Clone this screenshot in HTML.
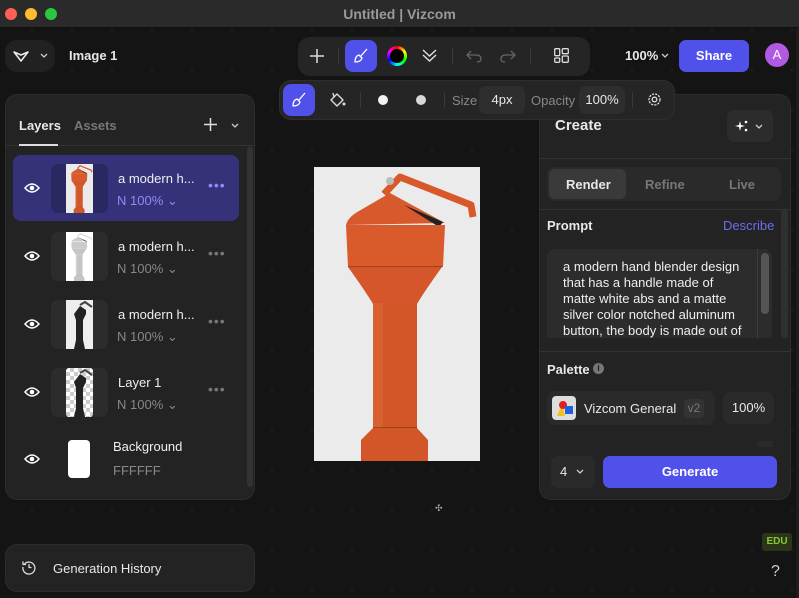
<!DOCTYPE html>
<html><head><meta charset="utf-8"><style>
*{box-sizing:border-box;margin:0;padding:0}
body{width:799px;height:598px;overflow:hidden;background:#141414;font-family:"Liberation Sans",sans-serif;color:#e8e8e8;position:relative;
background-image:radial-gradient(#222 1px,transparent 1.2px);background-size:40px 40px;background-position:12px 10px}
.a{position:absolute}
.title{left:0;top:0;width:799px;height:28px;background:#2a2a2a;border-bottom:1px solid #111;text-align:center;font-weight:bold;font-size:14px;color:#9a9a9a;line-height:28px}
.dot{width:12px;height:12px;border-radius:50%;top:8px}
.box{background:#232323;border-radius:12px}
.t{font-size:13px;white-space:nowrap}
.b{font-weight:bold}
svg{position:absolute;overflow:visible}
.lname{font-size:13px;color:#eee}
.lsub{font-size:13px;color:#888}
.thumb{width:57px;height:49px;background:#2c2c2c;border-radius:7px}
</style></head><body>
<svg width="0" height="0" style="position:absolute">
<defs>
<symbol id="bl" viewBox="0 0 166 294" preserveAspectRatio="none">
<rect width="166" height="294" fill="#ebebeb"/>
<path d="M70 27 L86 10 L157 38 L159 50" fill="none" stroke="#d9582a" stroke-width="7" stroke-linejoin="round"/>
<circle cx="76" cy="14" r="4" fill="#bbb"/>
<path d="M32 58 Q34 50 45 44 L76 26 L131 56 Z" fill="#d8592b"/>
<path d="M90 38 L125 60 L129 55 Z" fill="#222"/>
<path d="M32 58 L131 58 L129 100 L34 100 Z" fill="#d95a2b"/>
<line x1="34" y1="100" x2="128" y2="100" stroke="#6a2a10" stroke-width="1"/>
<path d="M34 100 L128 100 Q110 125 103 137 L59 137 Q52 125 34 100 Z" fill="#d4562a"/>
<rect x="59" y="136" width="44" height="126" fill="#d35628"/>
<rect x="59" y="136" width="10" height="126" fill="#e06a3a" opacity=".5"/>
<line x1="59" y1="261" x2="103" y2="261" stroke="#6a2a10"/>
<path d="M59 261 L103 261 L114 273 L114 294 L47 294 L47 273 Z" fill="#d35628"/>
</symbol>
</defs></svg>

<div class="a title">Untitled | Vizcom</div>
<div class="a dot" style="left:5px;background:#fe5f57"></div>
<div class="a dot" style="left:25px;background:#febc2e"></div>
<div class="a dot" style="left:45px;background:#28c840"></div>

<div class="a box" style="left:5px;top:40px;width:50px;height:32px;background:#212121"></div>
<svg style="left:13px;top:48px" width="16" height="16"><path d="M1 4 L8 13 L15 4 L8 7 Z" fill="none" stroke="#eee" stroke-width="1.5" stroke-linejoin="round"/></svg>
<svg style="left:40px;top:53px" width="8" height="6"><path d="M1 1 L4 4 L7 1" fill="none" stroke="#ccc" stroke-width="1.3"/></svg>
<div class="a t b" style="left:69px;top:48px">Image 1</div>

<!-- toolbar 1 -->
<div class="a box" style="left:298px;top:37px;width:292px;height:39px;background:#252525"></div>
<svg style="left:310px;top:49px" width="14" height="14"><path d="M7 0V14M0 7H14" stroke="#ddd" stroke-width="1.5"/></svg>
<div class="a" style="left:338px;top:48px;width:1px;height:16px;background:#3a3a3a"></div>
<div class="a" style="left:345px;top:40px;width:32px;height:32px;background:#5050ea;border-radius:8px"></div>
<svg style="left:353px;top:48px" width="16" height="16"><path d="M14 1 L7 9 M9 10 L6 7 Q2 8 2 14 Q8 14 9 10 Z" fill="none" stroke="#fff" stroke-width="1.3" stroke-linejoin="round"/></svg>
<div class="a" style="left:387px;top:46px;width:20px;height:20px;border-radius:50%;background:conic-gradient(red,yellow,lime,cyan,blue,magenta,red)"></div>
<div class="a" style="left:390px;top:49px;width:14px;height:14px;border-radius:50%;background:#000"></div>
<svg style="left:422px;top:48px" width="15" height="15"><path d="M1 2 L7.5 8 L14 2 M1 7 L7.5 13 L14 7" fill="none" stroke="#ddd" stroke-width="1.4"/></svg>
<div class="a" style="left:452px;top:48px;width:1px;height:16px;background:#3a3a3a"></div>
<svg style="left:466px;top:49px" width="16" height="14"><path d="M5 2 L1 6 L5 10 M1 6 H10 Q15 6 15 10 Q15 13 11 13" fill="none" stroke="#666" stroke-width="1.3"/></svg>
<svg style="left:500px;top:49px" width="16" height="14"><path d="M11 2 L15 6 L11 10 M15 6 H6 Q1 6 1 10 Q1 13 5 13" fill="none" stroke="#666" stroke-width="1.3"/></svg>
<div class="a" style="left:530px;top:48px;width:1px;height:16px;background:#3a3a3a"></div>
<svg style="left:554px;top:48px" width="15" height="15"><g fill="none" stroke="#ddd" stroke-width="1.3"><rect x=".7" y=".7" width="5" height="7" rx="1"/><rect x="8.3" y=".7" width="6" height="5" rx="1"/><rect x=".7" y="10" width="5" height="4.3" rx="1"/><rect x="8.3" y="8" width="6" height="6.3" rx="1"/></g></svg>

<div class="a t b" style="left:625px;top:48px">100%</div>
<svg style="left:661px;top:53px" width="8" height="6"><path d="M1 1 L4 4 L7 1" fill="none" stroke="#ccc" stroke-width="1.3"/></svg>
<div class="a t b" style="left:679px;top:40px;width:70px;height:32px;background:#5050ea;border-radius:7px;text-align:center;line-height:32px;color:#fff">Share</div>
<div class="a t" style="left:765px;top:43px;width:24px;height:24px;border-radius:50%;background:#b05ae2;color:#fff;text-align:center;line-height:24px">A</div>

<!-- left panel -->
<div class="a box" style="left:5px;top:94px;width:250px;height:406px;border:1px solid #2c2c2c"></div>
<div class="a t b" style="left:19px;top:118px">Layers</div>
<div class="a t b" style="left:74px;top:118px;color:#777">Assets</div>
<svg style="left:204px;top:118px" width="13" height="13"><path d="M6.5 0V13M0 6.5H13" stroke="#ddd" stroke-width="1.5"/></svg>
<svg style="left:231px;top:123px" width="8" height="6"><path d="M1 1 L4 4 L7 1" fill="none" stroke="#ccc" stroke-width="1.3"/></svg>
<div class="a" style="left:5px;top:145px;width:250px;height:1px;background:#333"></div>
<div class="a" style="left:19px;top:144px;width:39px;height:2px;background:#ddd"></div>
<div class="a" style="left:247px;top:147px;width:6px;height:340px;background:#333;border-radius:3px"></div>

<div class="a" style="left:13px;top:155px;width:226px;height:66px;background:#35327a;border-radius:8px"></div>
<div class="a thumb" style="left:51px;top:164px;background:#2a2860"></div>
<svg style="left:66px;top:164px" width="27" height="49"><use href="#bl" width="27" height="49"/></svg>
<div class="a lname" style="left:118px;top:171px">a modern h...</div>
<div class="a lsub" style="left:117px;top:193px;color:#8e8cf5">N 100% ⌄</div>
<div class="a" style="left:208px;top:177px;font-size:14px;color:#8e8cf5;letter-spacing:1px">•••</div>

<div class="a thumb" style="left:51px;top:232px"></div>
<svg style="left:66px;top:232px" width="27" height="49"><use href="#bl" width="27" height="49" style="filter:grayscale(1) brightness(1.8)"/></svg>
<div class="a lname" style="left:118px;top:239px">a modern h...</div>
<div class="a lsub" style="left:117px;top:261px">N 100% ⌄</div>
<div class="a" style="left:208px;top:245px;font-size:14px;color:#777;letter-spacing:1px">•••</div>

<div class="a thumb" style="left:51px;top:300px"></div>
<svg style="left:66px;top:300px" width="27" height="49"><rect width="27" height="49" fill="#eee"/><path d="M8 14 L14 6 L20 10 L20 14 L17 20 L17 40 L19 49 L8 49 L10 40 L10 20 Z" fill="#222"/><path d="M14 5 L19 2 L26 7" fill="none" stroke="#444" stroke-width="2"/></svg>
<div class="a lname" style="left:118px;top:307px">a modern h...</div>
<div class="a lsub" style="left:117px;top:329px">N 100% ⌄</div>
<div class="a" style="left:208px;top:313px;font-size:14px;color:#777;letter-spacing:1px">•••</div>

<div class="a thumb" style="left:51px;top:368px"></div>
<div class="a" style="left:66px;top:368px;width:27px;height:49px;border-radius:3px;background:repeating-conic-gradient(#ccc 0 25%,#fff 0 50%) 0 0/8px 8px"></div>
<svg style="left:66px;top:368px" width="27" height="49"><path d="M8 14 L14 6 L20 10 L20 14 L17 20 L17 40 L19 49 L8 49 L10 40 L10 20 Z" fill="#222"/><path d="M14 5 L19 2 L26 7" fill="none" stroke="#444" stroke-width="2"/></svg>
<div class="a lname" style="left:118px;top:375px">Layer 1</div>
<div class="a lsub" style="left:117px;top:397px">N 100% ⌄</div>
<div class="a" style="left:208px;top:381px;font-size:14px;color:#777;letter-spacing:1px">•••</div>

<div class="a" style="left:68px;top:440px;width:22px;height:38px;background:#fff;border-radius:4px"></div>
<div class="a lname" style="left:113px;top:439px">Background</div>
<div class="a lsub" style="left:113px;top:463px">FFFFFF</div>

<svg style="left:24px;top:182px" width="16" height="12"><path d="M1 6 Q8 -2 15 6 Q8 14 1 6Z" fill="none" stroke="#fff" stroke-width="1.5"/><circle cx="8" cy="6" r="2.3" fill="#fff"/></svg>
<svg style="left:24px;top:250px" width="16" height="12"><path d="M1 6 Q8 -2 15 6 Q8 14 1 6Z" fill="none" stroke="#fff" stroke-width="1.5"/><circle cx="8" cy="6" r="2.3" fill="#fff"/></svg>
<svg style="left:24px;top:318px" width="16" height="12"><path d="M1 6 Q8 -2 15 6 Q8 14 1 6Z" fill="none" stroke="#fff" stroke-width="1.5"/><circle cx="8" cy="6" r="2.3" fill="#fff"/></svg>
<svg style="left:24px;top:386px" width="16" height="12"><path d="M1 6 Q8 -2 15 6 Q8 14 1 6Z" fill="none" stroke="#fff" stroke-width="1.5"/><circle cx="8" cy="6" r="2.3" fill="#fff"/></svg>
<svg style="left:24px;top:453px" width="16" height="12"><path d="M1 6 Q8 -2 15 6 Q8 14 1 6Z" fill="none" stroke="#fff" stroke-width="1.5"/><circle cx="8" cy="6" r="2.3" fill="#fff"/></svg>

<div class="a box" style="left:5px;top:544px;width:250px;height:48px;border:1px solid #2c2c2c"></div>
<svg style="left:22px;top:560px" width="14" height="14"><path d="M2.5 4 A6 6 0 1 1 1 7" fill="none" stroke="#ddd" stroke-width="1.3"/><path d="M1 1.5 V4.5 H4" fill="none" stroke="#ddd" stroke-width="1.3"/><path d="M7 4 V7.5 H9.5" fill="none" stroke="#ddd" stroke-width="1.3"/></svg>
<div class="a t" style="left:53px;top:561px">Generation History</div>

<!-- canvas image -->
<svg style="left:314px;top:167px" width="166" height="294"><use href="#bl" width="166" height="294"/></svg>
<div class="a" style="left:435px;top:503px;font-size:9px;color:#aaa">✣</div>

<!-- right panel -->
<div class="a box" style="left:539px;top:94px;width:252px;height:406px;border:1px solid #2c2c2c"></div>
<div class="a b" style="left:555px;top:117px;font-size:15px">Create</div>
<div class="a" style="left:727px;top:110px;width:46px;height:32px;background:#2c2c2c;border-radius:7px"></div>
<svg style="left:735px;top:120px" width="14" height="12"><path d="M5 1 L6 5 L10 6 L6 7 L5 11 L4 7 L0 6 L4 5Z" fill="#fff"/><circle cx="11" cy="2" r="1.3" fill="#fff"/><circle cx="11" cy="10" r="1.3" fill="#fff"/></svg>
<svg style="left:755px;top:124px" width="8" height="6"><path d="M1 1 L4 4 L7 1" fill="none" stroke="#ccc" stroke-width="1.3"/></svg>
<div class="a" style="left:539px;top:158px;width:252px;height:1px;background:#333"></div>
<div class="a" style="left:547px;top:167px;width:234px;height:34px;background:#2a2a2a;border-radius:7px"></div>
<div class="a" style="left:549px;top:169px;width:77px;height:30px;background:#3a3a3a;border-radius:6px"></div>
<div class="a t b" style="left:566px;top:177px">Render</div>
<div class="a t b" style="left:645px;top:177px;color:#777">Refine</div>
<div class="a t b" style="left:729px;top:177px;color:#777">Live</div>
<div class="a" style="left:539px;top:209px;width:252px;height:1px;background:#333"></div>
<div class="a t b" style="left:547px;top:218px">Prompt</div>
<div class="a t" style="left:723px;top:218px;color:#6c6cf0">Describe</div>
<div class="a" style="left:547px;top:249px;width:225px;height:89px;background:#2c2c2c;border-radius:8px 8px 0 0;overflow:hidden">
<div style="position:absolute;left:16px;top:10px;font-size:13px;line-height:16px;color:#eee;white-space:nowrap">a modern hand blender design<br>that has a handle made of<br>matte white abs and a matte<br>silver color notched aluminum<br>button, the body is made out of</div>
</div>
<div class="a" style="left:757px;top:249px;width:1px;height:89px;background:#3d3d3d"></div>
<div class="a" style="left:761px;top:253px;width:8px;height:61px;background:#555;border-radius:4px"></div>
<div class="a" style="left:781px;top:210px;width:7px;height:128px;background:#303030;border-radius:3px"></div>
<div class="a" style="left:539px;top:351px;width:252px;height:1px;background:#333"></div>
<div class="a t b" style="left:547px;top:362px">Palette</div>
<div class="a" style="left:593px;top:363px;width:11px;height:11px;border-radius:50%;background:#777;color:#222;font-size:9px;text-align:center;line-height:11px;font-weight:bold">i</div>
<div class="a" style="left:547px;top:391px;width:168px;height:34px;background:#2a2a2a;border-radius:8px"></div>
<div class="a" style="left:552px;top:396px;width:24px;height:24px;background:#ddd;border-radius:4px"></div>
<svg style="left:552px;top:396px" width="24" height="24"><path d="M5 20 L10 8 L13 20Z" fill="#f0c020"/><circle cx="11" cy="9" r="4" fill="#e02020"/><rect x="13" y="10" width="8" height="8" fill="#2060e0"/></svg>
<div class="a t" style="left:584px;top:401px">Vizcom General</div>
<div class="a" style="left:684px;top:399px;width:20px;height:19px;background:#333;border-radius:4px;font-size:12px;color:#777;text-align:center;line-height:19px">v2</div>
<div class="a t" style="left:723px;top:392px;width:51px;height:32px;background:#2a2a2a;border-radius:8px;text-align:center;line-height:32px">100%</div>
<div class="a" style="left:757px;top:441px;width:16px;height:6px;background:#2a2a2a;border-radius:4px 4px 0 0"></div>
<div class="a t" style="left:551px;top:456px;width:44px;height:32px;background:#2a2a2a;border-radius:7px;line-height:32px;padding-left:9px">4</div>
<svg style="left:576px;top:469px" width="8" height="6"><path d="M1 1 L4 4 L7 1" fill="none" stroke="#ccc" stroke-width="1.3"/></svg>
<div class="a t b" style="left:603px;top:456px;width:174px;height:32px;background:#5050ea;border-radius:7px;text-align:center;line-height:32px;color:#fff">Generate</div>

<!-- toolbar 2 (above panels) -->
<div class="a box" style="left:279px;top:80px;width:396px;height:40px;background:#252525;border:1px solid #2e2e2e"></div>
<div class="a" style="left:283px;top:84px;width:32px;height:32px;background:#5050ea;border-radius:8px"></div>
<svg style="left:291px;top:92px" width="16" height="16"><path d="M14 1 L7 9 M9 10 L6 7 Q2 8 2 14 Q8 14 9 10 Z" fill="none" stroke="#fff" stroke-width="1.3" stroke-linejoin="round"/></svg>
<svg style="left:329px;top:92px" width="17" height="16"><path d="M2 8 L8 2 L14 8 L8 14 Z" fill="none" stroke="#ddd" stroke-width="1.4" stroke-linejoin="round"/><path d="M5 5 L4 1" stroke="#ddd" stroke-width="1.4"/><circle cx="15" cy="12" r="1.5" fill="#ddd"/></svg>
<div class="a" style="left:360px;top:92px;width:1px;height:16px;background:#3a3a3a"></div>
<div class="a" style="left:378px;top:95px;width:10px;height:10px;border-radius:50%;background:#f2f2f2"></div>
<div class="a" style="left:416px;top:95px;width:10px;height:10px;border-radius:50%;background:#d8d8d8"></div>
<div class="a" style="left:444px;top:92px;width:1px;height:16px;background:#3a3a3a"></div>
<div class="a t" style="left:452px;top:93px;color:#888">Size</div>
<div class="a t" style="left:479px;top:86px;width:46px;height:28px;background:#2e2e2e;border-radius:7px;text-align:center;line-height:28px">4px</div>
<div class="a t" style="left:531px;top:93px;color:#888">Opacity</div>
<div class="a t" style="left:579px;top:86px;width:46px;height:28px;background:#2e2e2e;border-radius:7px;text-align:center;line-height:28px">100%</div>
<div class="a" style="left:632px;top:92px;width:1px;height:16px;background:#3a3a3a"></div>
<svg style="left:647px;top:92px" width="15" height="15"><circle cx="7.5" cy="7.5" r="2.3" fill="none" stroke="#ddd" stroke-width="1.3"/><circle cx="7.5" cy="7.5" r="5.5" fill="none" stroke="#ddd" stroke-width="1.3" stroke-dasharray="2.2 1.1"/></svg>

<div class="a b" style="left:762px;top:533px;width:30px;height:18px;background:#2b3618;border-radius:3px;color:#8cc43a;font-size:10px;text-align:center;line-height:18px">EDU</div>
<div class="a" style="left:771px;top:563px;font-size:16px;color:#ccc">?</div>
<div class="a" style="left:796px;top:28px;width:3px;height:570px;background:#1d1d1d"></div>
</body></html>
